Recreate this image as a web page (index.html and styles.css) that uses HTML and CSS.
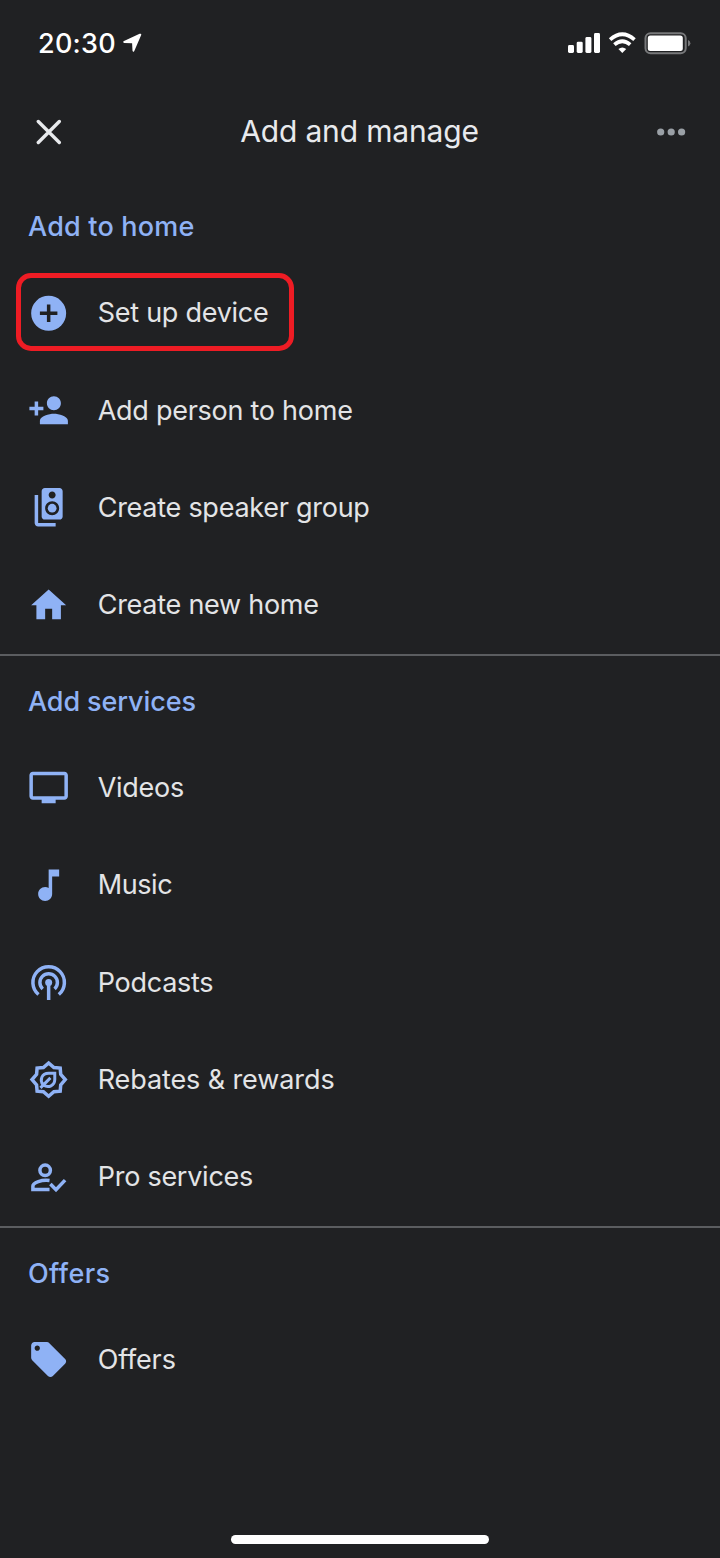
FILE: index.html
```
<!DOCTYPE html>
<html lang="en">
<head>
<meta charset="utf-8">
<title>Add and manage</title>
<link rel="stylesheet" href="styles.css">
</head>
<body>
<div class="screen">
  <div class="status">
    <span class="time">20:30</span>
    <svg class="loc" width="20" height="20" viewBox="0 0 20 20"><path d="M19.200 2 12.300 18Q11.200 19.800 10.500 17.800L10.100 10.200 2.200 9.900Q.2 9 2 7.900L17.600.8Q19.700.2 19.200 2Z"/></svg>
    <svg class="indicators" width="124" height="24" viewBox="0 0 124 24">
      <g fill="#fff">
        <rect x="1" y="14" width="6" height="8" rx="1.4"/><rect x="9.700" y="10.700" width="6" height="11.300" rx="1.400"/><rect x="18.400" y="6" width="6" height="16" rx="1.400"/><rect x="27" y="2" width="6" height="20" rx="1.400"/>
        <path d="M55.300 22 51.400 18.100Q55.300 15 59.200 18.100Z"/>
      </g>
      <path d="M43.100 8.600Q55.300-2.200 67.500 8.600M47.400 13.700Q55.300 6.800 63.200 13.700" fill="none" stroke="#fff" stroke-width="3.700"/>
      <rect x="78.500" y="2.200" width="40.200" height="20" rx="5" fill="none" stroke="#77787a" stroke-width="2"/>
      <rect x="80.800" y="4.500" width="35" height="15.600" rx="2.500" fill="#fff"/>
      <path d="M121 9v6.600q2.400-1 2.400-3.300T121 9Z" fill="#77787a"/>
    </svg>
  </div>
  <header class="bar">
    <svg class="close" width="26" height="26" viewBox="0 0 26 26"><path d="M2.300 2.500l21 21M23.300 2.500l-21 21"/></svg>
    <h1 class="title">Add and manage</h1>
    <svg class="more" width="30" height="8" viewBox="0 0 30 8"><circle cx="4.700" cy="4" r="3.600"/><circle cx="15.200" cy="4" r="3.600"/><circle cx="25.600" cy="4" r="3.600"/></svg>
  </header>
  <main>
    <section class="group">
      <h2 class="heading h-home">Add to home</h2>
      <div class="row target"><svg class="icon" viewBox="0.2 -0.15 24 24"><path fill-rule="evenodd" d="M12 2a10 10 0 1 0 0 20 10 10 0 0 0 0-20zm5 11h-4v4h-2v-4H7v-2h4V7h2v4h4v2z"/></svg><span class="label">Set up device</span></div>
      <div class="row"><svg class="icon" viewBox="0.2 -0.15 24 24"><path d="M15 12c2.210 0 4-1.790 4-4s-1.790-4-4-4-4 1.790-4 4 1.790 4 4 4zm-9-2V7H4v3H1v2h3v3h2v-3h3v-2H6zm9 4c-2.670 0-8 1.340-8 4v2h16v-2c0-2.660-5.330-4-8-4z"/></svg><span class="label">Add person to home</span></div>
      <div class="row"><svg class="icon" viewBox="0.2 -0.2 24 24"><path d="M18.200 1H9.800C8.810 1 8 1.810 8 2.800v14.400c0 .99.810 1.790 1.800 1.790l8.400.01c.99 0 1.800-.81 1.800-1.800V2.800c0-.99-.81-1.800-1.800-1.800zM14 3c1.100 0 2 .89 2 2s-.9 2-2 2-2-.89-2-2 .9-2 2-2zm0 13.500c-2.210 0-4-1.790-4-4s1.790-4 4-4 4 1.790 4 4-1.790 4-4 4zM6 5H4v16c0 1.100.89 2 2 2h10v-2H6V5z"/><circle cx="14" cy="12.500" r="2.500"/></svg><span class="label">Create speaker group</span></div>
      <div class="row"><svg class="icon" viewBox="0.2 -0.2 24 24"><path d="M10 20v-6h4v6h5v-8h3L12 3 2 12h3v8z"/></svg><span class="label">Create new home</span></div>
    </section>
    <section class="group ruled">
      <h2 class="heading h-services">Add services</h2>
      <div class="row"><svg class="icon" viewBox="0.2 -0.35 24 24"><path d="M21 3H3c-1.110 0-2 .89-2 2v12c0 1.100.89 2 2 2h5v2h8v-2h5c1.100 0 2-.9 2-2V5c0-1.110-.9-2-2-2zm0 14H3V5h18v12z"/></svg><span class="label">Videos</span></div>
      <div class="row"><svg class="icon" viewBox="0.2 -0.2 24 24"><path d="M12 3v10.550c-.59-.34-1.270-.55-2-.55-2.210 0-4 1.790-4 4s1.790 4 4 4 4-1.790 4-4V7h4V3h-6z"/></svg><span class="label music">Music</span></div>
      <div class="row"><svg class="icon line" viewBox="0.2 -0.25 24 24"><path d="M6.200 18.900A9 9 0 1 1 17.800 18.900M8.600 15.700A5 5 0 1 1 15.400 15.700M12 12v10"/><circle class="solid" cx="12" cy="12" r="2"/></svg><span class="label">Podcasts</span></div>
      <div class="row"><svg class="icon line" viewBox="0.2 -0.35 24 24"><path d="M12 2.500 15 5.100 18.600 5.400 18.900 9 21.500 12 18.900 15 18.600 18.600 15 18.900 12 21.500 9 18.900 5.400 18.600 5.100 15 2.500 12 5.100 9 5.400 5.400 9 5.100Z"/><path stroke-width="1.700" d="M15.500 8.400H12C8 8.400 6.700 12.200 8.800 15 12 17.200 15.500 15.300 15.500 12ZM7.300 16.700 13 11"/></svg><span class="label rebates">Rebates &amp; rewards</span></div>
      <div class="row"><svg class="icon line" viewBox="0.2 -0.2 24 24"><circle cx="10" cy="8" r="3"/><path d="M12.500 13.800C8 13.200 3 15 3 17V19h9.500M13 15.800l3.200 3.300 5.200-5.500"/></svg><span class="label">Pro services</span></div>
    </section>
    <section class="group ruled">
      <h2 class="heading h-offers">Offers</h2>
      <div class="row"><svg class="icon" viewBox="0.2 -0.35 24 24"><path d="M21.410 11.580l-9-9C12.050 2.220 11.550 2 11 2H4c-1.100 0-2 .9-2 2v7c0 .55.220 1.050.59 1.420l9 9c.36.36.86.58 1.410.58.55 0 1.050-.22 1.410-.59l7-7c.37-.36.59-.86.59-1.410 0-.55-.23-1.060-.59-1.420zM5.500 7C4.670 7 4 6.330 4 5.500S4.670 4 5.500 4 7 4.670 7 5.500 6.330 7 5.500 7z"/></svg><span class="label offers">Offers</span></div>
    </section>
  </main>
  <div class="home-indicator"></div>
</div>
</body>
</html>
```

FILE: styles.css
```
*, *::after { box-sizing: border-box; }
body { margin: 0; background: #202123; font-family: Inter, "Liberation Sans", sans-serif; }
.screen { width: 720px; height: 1558px; display: flex; flex-direction: column; background: #202123; overflow: hidden; }
.status { height: 86px; display: flex; align-items: center; padding: 0 29px 0 38px; color: #fff; }
.time { font-size: 27px; font-weight: 550; letter-spacing: 0.25px; width: 84px; white-space: nowrap; }
.loc { fill: #fff; }
.indicators { margin-left: auto; }
.bar { height: 92px; display: flex; align-items: center; justify-content: space-between; padding: 0 34px 0 36px; }
.close { fill: none; stroke: #e8eaed; stroke-width: 3.4; stroke-linecap: round; }
.title { margin: 0; padding: 0 0 2px 1px; font-size: 30px; font-weight: 400; letter-spacing: -0.15px; color: #e8eaed; white-space: nowrap; }
.more { fill: #9aa0a6; }
.heading { margin: 0; height: 86px; padding: 6px 28px 0; line-height: 86px; font-size: 27px; font-weight: 500; color: #8fb2f5; white-space: nowrap; }
.ruled { border-top: 2px solid #5b5d60; }
.ruled .heading { height: 83px; padding-top: 3px; }
.h-home { letter-spacing: 0.2px; }
.h-services { letter-spacing: -0.1px; }
.h-offers { letter-spacing: 0.35px; }
.row { position: relative; height: 97.4px; display: flex; align-items: center; padding-left: 28px; }
.icon { width: 42px; height: 42px; flex: none; fill: #8fb2f5; }
.line { fill: none; stroke: #8fb2f5; stroke-width: 2; }
.solid { fill: #8fb2f5; stroke: none; }
.label { margin-left: 27.7px; font-size: 27px; letter-spacing: -0.26px; color: #e3e4e6; white-space: nowrap; }
.music { letter-spacing: -0.4px; }
.rebates { letter-spacing: -0.1px; }
.offers { letter-spacing: -0.15px; }
.target::after { content: ""; position: absolute; left: 16px; top: 9px; width: 278px; height: 78px; border: 5px solid #ee1c24; border-radius: 15px; }
.home-indicator { width: 258px; height: 9px; margin: auto auto 14px; border-radius: 5px; background: #fff; }
```
